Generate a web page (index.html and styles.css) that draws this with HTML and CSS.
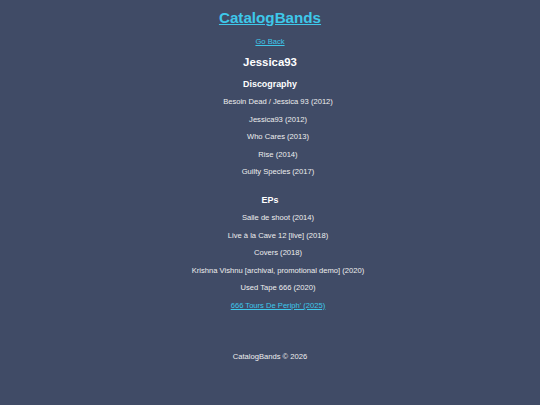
FILE: index.html
```html
<!DOCTYPE html>
<html>

<head>
    <meta charset="UTF-8">
    <meta name="viewport" content="width=device-width, initial-scale=1">
    <title>CatalogBands - Jessica93</title>
    <link rel="stylesheet" href="styles.css">
</head>

<body>
<header>
    <h1><a href="#">CatalogBands</a></h1>
</header>

<main>
    <p class="retur"><a href="#">Go Back</a></p>
    <h2>Jessica93</h2>

    <section class="udgivelser diskografi">
        <h3>Discography</h3>
        <ul>
            <li>Besoin Dead / Jessica 93 (2012)</li>
            <li>Jessica93 (2012)</li>
            <li>Who Cares (2013)</li>
            <li>Rise (2014)</li>
            <li>Guilty Species (2017)</li>
        </ul>
    </section>

    <section class="udgivelser">
        <h3>EPs</h3>
        <ul>
            <li>Salle de shoot (2014)</li>
            <li>Live à la Cave 12 [live] (2018)</li>
            <li>Covers (2018)</li>
            <li>Krishna Vishnu [archival, promotional demo] (2020)</li>
            <li>Used Tape 666 (2020)</li>
            <li><a href="#">666 Tours De Periph' (2025)</a></li>
        </ul>
    </section>
</main>

<footer>
    <p>CatalogBands © 2026</p>
</footer>
</body>

</html>
```

FILE: styles.css
```css
body {
    margin: 0;
    background-color: #404b66;
    color: #eeeeee;
    font-family: "Liberation Sans", Arial, sans-serif;
    font-size: 7.6px;
    line-height: 10px;
    text-align: center;
}

a {
    color: #3ec8ea;
}

header {
    padding-top: 9px;
}

h1 {
    font-size: 15.2px;
    line-height: 18px;
    margin: 0;
}

.retur {
    margin: 10px 0 0;
}

h2 {
    font-size: 11.4px;
    line-height: 14px;
    color: white;
    margin: 8px 0 0;
}

h3 {
    font-size: 8.9px;
    line-height: 12px;
    color: white;
    margin: 9px 0 0;
}

.udgivelser + .udgivelser h3 {
    margin-top: 16.6px;
}

ul {
    list-style: none;
    padding: 0 0 0 16px;
    margin: 0;
}

.diskografi ul {
    margin-top: 1px;
}

li {
    margin-top: 7.6px;
}

li:first-child {
    margin-top: 7px;
}

footer p {
    margin: 41px 0 0;
}
```
